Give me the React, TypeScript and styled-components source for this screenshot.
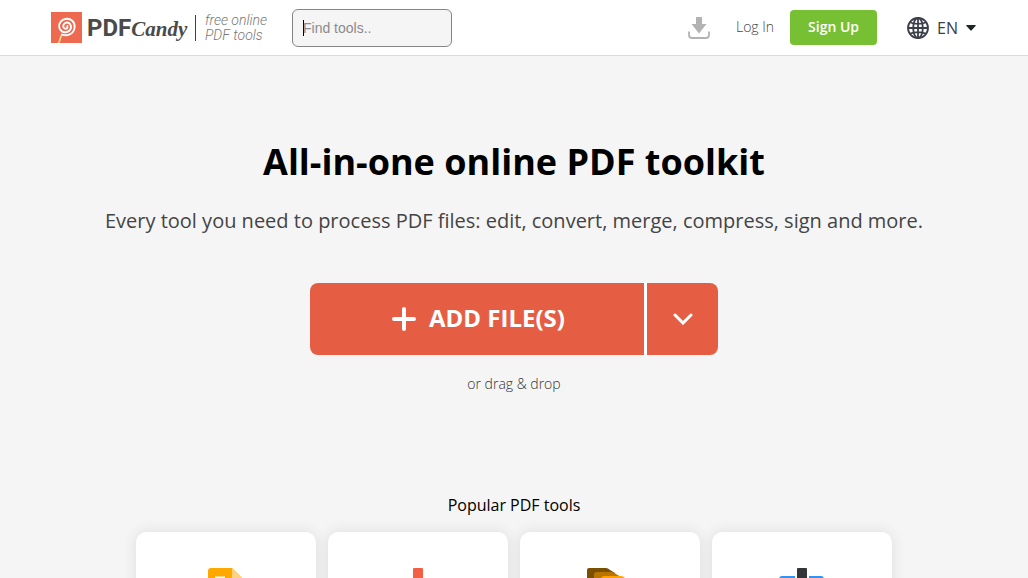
import React from "react";
import styled, { createGlobalStyle } from "styled-components";

const Global = createGlobalStyle`
  * { box-sizing: border-box; }
  body {
    margin: 0;
    background: #f5f5f5;
    color: #000;
    font-family: "Open Sans", "Noto Sans", sans-serif;
  }
  button, input { font: inherit; }
  svg { display: block; flex: none; }
`;

const Page = styled.div`
  height: 100vh;
  overflow: hidden;
`;

const Header = styled.header`
  display: flex;
  align-items: center;
  justify-content: space-between;
  height: 56px;
  padding: 0 52px 0 51px;
  background: #fff;
  border-bottom: 1px solid #dcdcdc;
`;

const Group = styled.div`
  display: flex;
  align-items: center;
`;

const Brand = styled.a`
  display: flex;
  align-items: center;
  width: 241px;
  color: #4a4a4a;
  text-decoration: none;
`;

const Wordmark = styled.span`
  display: flex;
  align-items: baseline;
  width: 113px;
  padding: 2px 0 0 5px;
  white-space: nowrap;
`;

const WordBold = styled.span`
  font: 700 24px/32px Roboto, sans-serif;
`;

const WordScript = styled.span`
  font: italic 700 21px/32px "Liberation Serif", serif;
`;

const Tagline = styled.span`
  padding-left: 9px;
  color: #777;
  font: italic 300 14px/15px Roboto, sans-serif;
  white-space: nowrap;
`;

const Divider = styled.span`
  width: 1px;
  height: 26px;
  background: #3c3f46;
`;

const Search = styled.input`
  width: 160px;
  height: 38px;
  padding: 0 10px;
  border: 1px solid #858585;
  border-radius: 6px;
  background: linear-gradient(#000, #000) 10px 50% / 1px 16px no-repeat #f5f5f5;
  font: 14px "Liberation Sans", Arial, sans-serif;
  outline: none;
  caret-color: transparent;
  &::placeholder { color: #8b8b8b; opacity: 1; }
`;

const TextLink = styled.a`
  padding-bottom: 2px;
  color: #444;
  font-size: 14px;
  font-weight: 300;
  line-height: 20px;
  text-decoration: none;
`;

const IconLink = styled.a`
  margin-right: 26px;
`;

const SignUp = styled.a`
  margin: 0 30px 0 16px;
  padding: 0 18px 2px;
  border-radius: 4px;
  background: #78c033;
  color: #fff;
  font-size: 14px;
  font-weight: 600;
  line-height: 33px;
  text-decoration: none;
`;

const Language = styled.button`
  display: flex;
  align-items: center;
  gap: 8px;
  padding: 0;
  border: 0;
  background: none;
  color: #3c3f46;
  font-size: 16px;
  line-height: 24px;
`;

const Hero = styled.section`
  display: flex;
  flex-direction: column;
  align-items: center;
  padding: 81px 16px 0;
  text-align: center;
`;

const Title = styled.h1`
  margin: 0;
  font-size: 36px;
  font-weight: 700;
  line-height: 50px;
`;

const Lead = styled.p`
  margin: 19px 0 47px;
  color: #444;
  font-size: 20px;
  line-height: 30px;
`;

const Upload = styled.div`
  display: flex;
  gap: 3px;
  width: 100%;
  max-width: 408px;
  height: 72px;
  border-radius: 8px;
  background: #fff;
  overflow: hidden;
`;

const UploadButton = styled.button<{ $main?: boolean }>`
  display: flex;
  flex: ${(p) => (p.$main ? "1" : "0 0 71px")};
  align-items: center;
  justify-content: center;
  gap: 13px;
  padding: ${(p) => (p.$main ? "0 0 0 3px" : "0")};
  border: 0;
  background: #e55e43;
  color: #fff;
  font-size: 24px;
  font-weight: 700;
`;

const UploadLabel = styled.span`
  padding-bottom: 3px;
`;

const DropHint = styled.p`
  margin: 19px 0 0;
  color: #333;
  font-size: 14px;
  font-weight: 300;
  line-height: 20px;
`;

const Popular = styled.section`
  padding: 100px 16px 0;
`;

const SectionTitle = styled.h2`
  margin: 0 0 15px;
  font-size: 16px;
  font-weight: 400;
  line-height: 23px;
  text-align: center;
`;

const Cards = styled.div`
  display: grid;
  grid-template-columns: repeat(4, 1fr);
  gap: 12px;
  max-width: 756px;
  margin: 0 auto;
`;

const Card = styled.a`
  display: flex;
  justify-content: center;
  height: 180px;
  padding-top: 36px;
  border-radius: 10px;
  background: #fff;
  box-shadow: 0 0 14px rgba(40, 60, 50, 0.12);
`;

const CandyMark = () => (
  <svg width="31" height="31" viewBox="0 0 31 31" aria-hidden="true">
    <rect width="31" height="31" fill="#ed6a50" />
    <path d="M11 22.5C9 25 9.5 28 7.5 31" fill="none" stroke="#f6cf8b" strokeWidth="1.8" />
    <path
      d="M11 22.6C16 24.6 23 22 23.6 15.5C24.2 9.5 19.5 6.5 15.5 6.8C10.5 7.2 7.6 11.2 8.2 15.2C8.8 19.2 12.4 20.8 15.6 20C19 19.2 20.6 16.2 19.8 13.4C19 10.7 15.8 9.8 13.8 11.2C11.7 12.6 11.8 15.6 13.6 16.5C15.4 17.3 17 15.9 16.4 14"
      fill="none"
      stroke="#fff"
      strokeWidth="1.9"
      strokeLinecap="round"
    />
  </svg>
);

const DownloadIcon = () => (
  <svg width="22" height="22" viewBox="0 0 22 22" aria-hidden="true">
    <path d="M8 0h6v7h4.500L11 16.500 3.500 7H8z" fill="#b3b3b3" />
    <path d="M1 14.500V18a3 3 0 0 0 3 3h14a3 3 0 0 0 3-3v-3.500" fill="none" stroke="#b3b3b3" strokeWidth="1.8" />
  </svg>
);

const GlobeIcon = () => (
  <svg width="22" height="22" viewBox="0 0 22 22" fill="none" stroke="#3c3f4a" strokeWidth="1.8" aria-hidden="true">
    <circle cx="11" cy="11" r="10" />
    <ellipse cx="11" cy="11" rx="4.800" ry="10" />
    <path d="M11 1v20M1 11h20M3 5.300c4 2.200 12 2.200 16 0M3 16.700c4-2.200 12-2.200 16 0" />
  </svg>
);

const ToWordIcon = () => (
  <svg width="48" height="48" viewBox="0 0 48 48" aria-hidden="true">
    <path d="M9 0h21l12 12v33a3 3 0 0 1-3 3H9a3 3 0 0 1-3-3V3a3 3 0 0 1 3-3z" fill="#ffa800" />
    <path d="M30 0l12 12H30z" fill="#ffd182" />
    <path d="M13 10h10M13 20h22M13 29h22" stroke="#fff" strokeWidth="3" />
  </svg>
);

const CompressIcon = () => (
  <svg width="48" height="48" viewBox="0 0 48 48" fill="#f25f45" aria-hidden="true">
    <path d="M20 0h8a1 1 0 0 1 1 1v25h9L24 40 10 26h9V1a1 1 0 0 1 1-1zM6 43h36v5H6z" />
  </svg>
);

const MergeIcon = () => (
  <svg width="48" height="48" viewBox="0 0 48 48" aria-hidden="true">
    <path d="M3 0h17q2 0 4 2l5 3v31H1V2q0-2 2-2z" fill="#7a4f00" />
    <path d="M11 4h15q2 0 4 2l5 3v33H8V7q0-3 3-3z" fill="#b87500" />
    <path d="M18 8h17q2 0 4 2l8 7v31H15V11q0-3 3-3z" fill="#ffa200" />
  </svg>
);

const SplitIcon = () => (
  <svg width="48" height="48" viewBox="0 0 48 48" aria-hidden="true">
    <path d="M4 8h13v40H4a3 3 0 0 1-3-3V11a3 3 0 0 1 3-3zM31 8h12a3 3 0 0 1 3 3v34a3 3 0 0 1-3 3H31z" fill="#3592f2" />
    <rect x="19" width="10" height="48" rx="1" fill="#333538" />
  </svg>
);

const tools = [
  { href: "#word", label: "PDF to Word", Icon: ToWordIcon },
  { href: "#compress", label: "Compress PDF", Icon: CompressIcon },
  { href: "#merge", label: "Merge PDF", Icon: MergeIcon },
  { href: "#split", label: "Split PDF", Icon: SplitIcon },
];

export default function App() {
  return (
    <Page>
      <Global />
      <Header>
        <Group>
          <Brand href="#home">
            <CandyMark />
            <Wordmark>
              <WordBold>PDF</WordBold>
              <WordScript>Candy</WordScript>
            </Wordmark>
            <Divider />
            <Tagline>
              free online
              <br />
              PDF tools
            </Tagline>
          </Brand>
          <Search type="text" placeholder="Find tools.." aria-label="Find tools" />
        </Group>
        <Group>
          <IconLink href="#app" aria-label="Download">
            <DownloadIcon />
          </IconLink>
          <TextLink href="#login">Log In</TextLink>
          <SignUp href="#signup">Sign Up</SignUp>
          <Language type="button">
            <GlobeIcon />
            EN
            <svg width="10" height="6" viewBox="0 0 10 6" aria-hidden="true">
              <path d="M1 0h8q1.500 0 .5 1L5.700 5.300q-.7.700-1.400 0L.5 1Q-.5 0 1 0z" fill="#212529" />
            </svg>
          </Language>
        </Group>
      </Header>
      <main>
        <Hero>
          <Title>All-in-one online PDF toolkit</Title>
          <Lead>Every tool you need to process PDF files: edit, convert, merge, compress, sign and more.</Lead>
          <Upload>
            <UploadButton type="button" $main>
              <svg width="24" height="24" viewBox="0 0 24 24" aria-hidden="true">
                <path d="M12 2v20M2 12h20" stroke="#fff" strokeWidth="4" strokeLinecap="round" />
              </svg>
              <UploadLabel>ADD FILE(S)</UploadLabel>
            </UploadButton>
            <UploadButton type="button" aria-label="More sources">
              <svg width="20" height="12" viewBox="0 0 20 12" aria-hidden="true">
                <path d="M2 2l8 8 8-8" fill="none" stroke="#fff" strokeWidth="3" strokeLinecap="round" />
              </svg>
            </UploadButton>
          </Upload>
          <DropHint>or drag &amp; drop</DropHint>
        </Hero>
        <Popular>
          <SectionTitle>Popular PDF tools</SectionTitle>
          <Cards>
            {tools.map(({ href, label, Icon }) => (
              <Card key={href} href={href} aria-label={label}>
                <Icon />
              </Card>
            ))}
          </Cards>
        </Popular>
      </main>
    </Page>
  );
}
